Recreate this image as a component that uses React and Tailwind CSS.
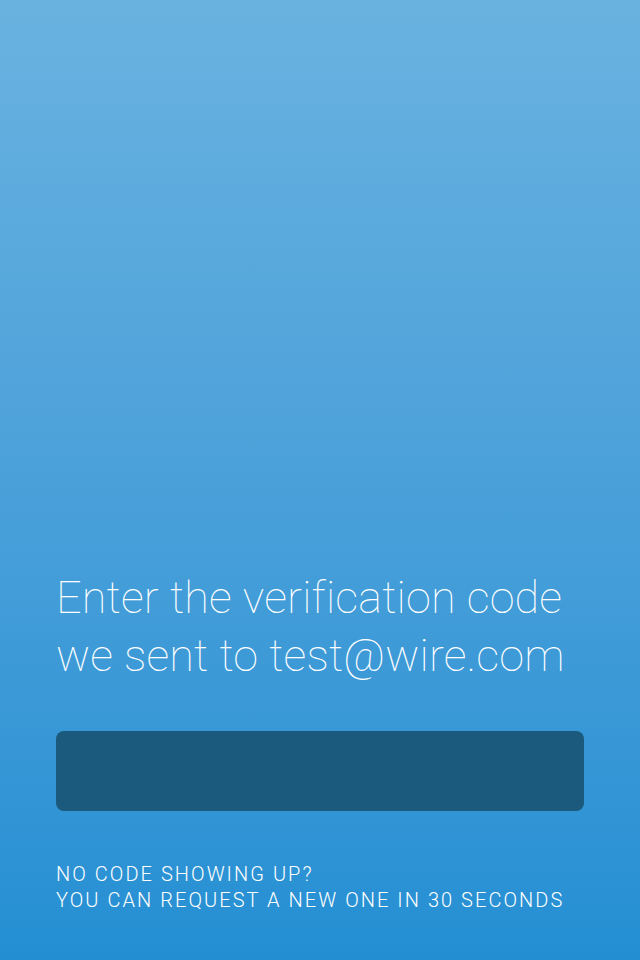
import React from "react";

export default function App() {
  return (
    <div
      className="w-[640px] h-[960px] flex flex-col justify-end px-14 pb-[47px] bg-linear-to-b from-[#69b2e0] to-[#238fd3] text-white"
      style={{ fontFamily: "Roboto, 'Noto Sans', sans-serif" }}
    >
      <h1 className="text-[45px] leading-[58px] font-thin tracking-[0.15px]">
        Enter the verification code
        <br />
        we sent to test@wire.com
      </h1>
      <div className="mt-[46px] h-[80px] rounded-lg bg-[#1b5a7d]" />
      <p className="mt-[50px] text-[20px] leading-[26px] font-light tracking-[2.05px] uppercase">
        No code showing up?
        <br />
        You can request a new one in 30 seconds
      </p>
    </div>
  );
}
